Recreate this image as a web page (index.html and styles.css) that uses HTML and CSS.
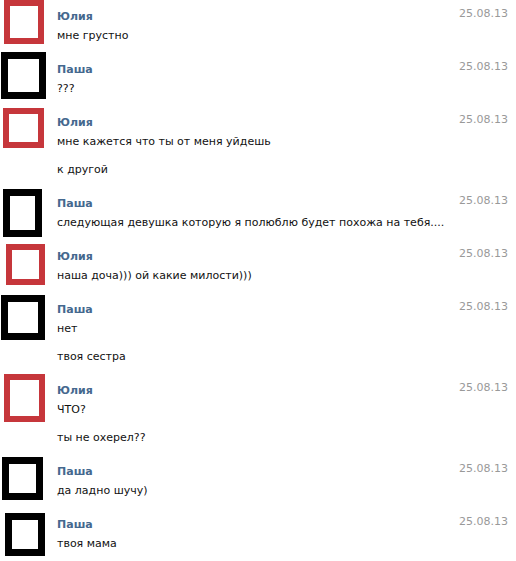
FILE: index.html
```html
<!DOCTYPE html>
<html lang="ru">
<head>
<meta charset="utf-8">
<title>Диалог</title>
<link rel="stylesheet" href="styles.css">
</head>
<body>
<div class="chat">
  <div class="row">
    <div class="side"><div class="av red a1"></div></div>
    <div class="body"><div class="name">Юлия</div><div class="text">мне грустно</div></div>
    <div class="date">25.08.13</div>
  </div>
  <div class="row">
    <div class="side"><div class="av black a2"></div></div>
    <div class="body"><div class="name">Паша</div><div class="text">???</div></div>
    <div class="date">25.08.13</div>
  </div>
  <div class="row">
    <div class="side"><div class="av red a3"></div></div>
    <div class="body"><div class="name">Юлия</div><div class="text">мне кажется что ты от меня уйдешь</div><div class="text">к другой</div></div>
    <div class="date">25.08.13</div>
  </div>
  <div class="row">
    <div class="side"><div class="av black a4"></div></div>
    <div class="body"><div class="name">Паша</div><div class="text">следующая девушка которую я полюблю будет похожа на тебя....</div></div>
    <div class="date">25.08.13</div>
  </div>
  <div class="row">
    <div class="side"><div class="av red a5"></div></div>
    <div class="body"><div class="name">Юлия</div><div class="text">наша доча))) ой какие милости)))</div></div>
    <div class="date">25.08.13</div>
  </div>
  <div class="row">
    <div class="side"><div class="av black a6"></div></div>
    <div class="body"><div class="name">Паша</div><div class="text">нет</div><div class="text">твоя сестра</div></div>
    <div class="date">25.08.13</div>
  </div>
  <div class="row">
    <div class="side"><div class="av red a7"></div></div>
    <div class="body"><div class="name">Юлия</div><div class="text">ЧТО?</div><div class="text">ты не охерел??</div></div>
    <div class="date">25.08.13</div>
  </div>
  <div class="row">
    <div class="side"><div class="av black a8"></div></div>
    <div class="body"><div class="name">Паша</div><div class="text">да ладно шучу)</div></div>
    <div class="date">25.08.13</div>
  </div>
  <div class="row">
    <div class="side"><div class="av black a9"></div></div>
    <div class="body"><div class="name">Паша</div><div class="text">твоя мама</div></div>
    <div class="date">25.08.13</div>
  </div>
</div>
</body>
</html>
```
FILE: styles.css
```css
html, body {
  margin: 0;
  padding: 0;
  background: #fff;
}
body {
  font-family: "DejaVu Sans", Verdana, sans-serif;
  font-size: 11px;
  color: #111;
}
.chat {
  display: flex;
  flex-direction: column;
  width: 516px;
}
.row {
  display: flex;
  align-items: flex-start;
  padding: 10px 0 10px 0;
}
.side {
  flex: none;
  width: 57px;
  height: 0;
}
.av {
  box-sizing: border-box;
  background: #fff;
}
.av.red { border: 6px solid #c6363b; }
.av.black { border: 7px solid #000; }
.a1 { margin: -10px 0 0 4px; width: 40px; height: 44px; }
.a2 { margin: -11px 0 0 1px; width: 45px; height: 47px; }
.a3 { margin: -8px 0 0 3px; width: 41px; height: 40px; }
.a4 { margin: -8px 0 0 3px; width: 39px; height: 48px; }
.a5 { margin: -6px 0 0 6px; width: 39px; height: 41px; }
.a6 { margin: -8px 0 0 1px; width: 44px; height: 45px; }
.a7 { margin: -10px 0 0 4px; width: 41px; height: 48px; }
.a8 { margin: -8px 0 0 2px; width: 41px; height: 43px; }
.a9 { margin: -5px 0 0 5px; width: 40px; height: 43px; }
.body {
  flex: 1;
  display: flex;
  flex-direction: column;
}
.name {
  font-weight: bold;
  color: #45688e;
  line-height: 14px;
}
.text {
  line-height: 14px;
  margin-top: 5px;
  white-space: nowrap;
}
.text + .text {
  margin-top: 14px;
}
.date {
  flex: none;
  margin: -3px 8px 0 0;
  line-height: 14px;
  color: #999;
}
```
